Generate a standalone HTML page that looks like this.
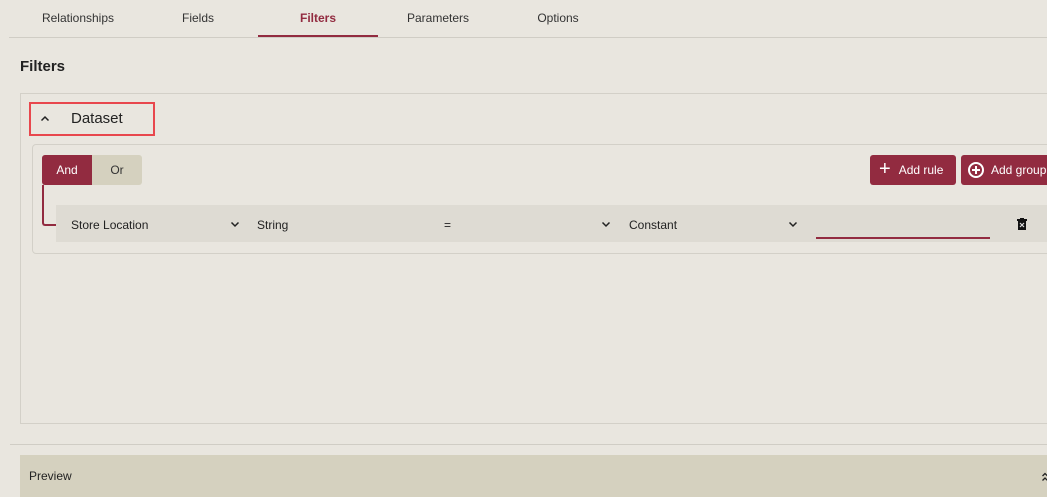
<!DOCTYPE html>
<html><head><style>
*{box-sizing:border-box;margin:0;padding:0}
body{width:1047px;height:497px;overflow:hidden;background:#e9e6df;font-family:"Segoe UI","Liberation Sans",sans-serif;color:#222;position:relative;font-size:12px}
.a{position:absolute}
.tab{position:absolute;top:11px;font-size:12px;color:#333;width:120px;text-align:center}
.btn{position:absolute;background:#922b40;color:#fff;border-radius:3px;font-size:12px;display:flex;align-items:center}
.t{position:absolute;top:218px}
</style></head><body>
<div class="tab" style="left:18px">Relationships</div>
<div class="tab" style="left:138px">Fields</div>
<div class="tab" style="left:258px;color:#922b40;font-weight:bold">Filters</div>
<div class="tab" style="left:378px">Parameters</div>
<div class="tab" style="left:498px">Options</div>
<div class="a" style="left:9px;top:37px;width:1038px;height:1px;background:#d0cdc5"></div>
<div class="a" style="left:258px;top:35px;width:120px;height:2px;background:#922b40"></div>
<div class="a" style="left:20px;top:58px;font-size:15px;font-weight:bold;color:#222">Filters</div>
<div class="a" style="left:20px;top:93px;width:1040px;height:331px;border:1px solid #d3d0c8"></div>
<div class="a" style="left:29px;top:102px;width:126px;height:34px;border:2px solid #e8474d"></div>
<svg class="a" style="left:40px;top:115px" width="10" height="7"><path d="M1.5 5.5L5 2l3.5 3.5" fill="none" stroke="#222" stroke-width="1.5"/></svg>
<div class="a" style="left:71px;top:110px;font-size:15px;color:#222">Dataset</div>
<div class="a" style="left:32px;top:144px;width:1030px;height:110px;border:1px solid #d3d0c8;border-radius:4px"></div>
<div class="a" style="left:42px;top:155px;width:100px;height:30px;background:#d5d1bf;border-radius:3px"></div>
<div class="btn" style="left:42px;top:155px;width:50px;height:30px;justify-content:center;border-radius:3px 0 0 3px">And</div>
<div class="a" style="left:92px;top:163px;width:50px;text-align:center;color:#333">Or</div>
<div class="a" style="left:42px;top:185px;width:14px;height:41px;border-left:2px solid #922b40;border-bottom:2px solid #922b40;border-bottom-left-radius:3px"></div>
<div class="btn" style="left:870px;top:155px;width:86px;height:30px;padding-left:9px"><span style="font-size:20px;margin-right:8px;line-height:1;margin-top:-2px">+</span>Add rule</div>
<div class="btn" style="left:961px;top:155px;width:100px;height:30px;padding-left:7px"><span style="display:inline-block;width:16px;height:16px;border:2px solid #fff;border-radius:50%;margin-right:7px;position:relative"><span style="position:absolute;left:5px;top:2px;width:2px;height:8px;background:#fff"></span><span style="position:absolute;left:2px;top:5px;width:8px;height:2px;background:#fff"></span></span>Add group</div>
<div class="a" style="left:56px;top:205px;width:991px;height:37px;background:#dedbd3"></div>
<div class="t" style="left:71px">Store Location</div>
<svg class="a" style="left:230px;top:221px" width="10" height="7"><path d="M1.5 1.5L5 5l3.5-3.5" fill="none" stroke="#222" stroke-width="1.5"/></svg>
<div class="t" style="left:257px">String</div>
<div class="t" style="left:444px">=</div>
<svg class="a" style="left:601px;top:221px" width="10" height="7"><path d="M1.5 1.5L5 5l3.5-3.5" fill="none" stroke="#222" stroke-width="1.5"/></svg>
<div class="t" style="left:629px">Constant</div>
<svg class="a" style="left:788px;top:221px" width="10" height="7"><path d="M1.5 1.5L5 5l3.5-3.5" fill="none" stroke="#222" stroke-width="1.5"/></svg>
<div class="a" style="left:816px;top:237px;width:174px;height:2px;background:#922b40"></div>
<svg class="a" style="left:1017px;top:218px" width="10" height="12" viewBox="0 0 10 12"><rect x="0" y="1" width="10" height="2" fill="#111"/><rect x="3" y="0" width="4" height="1" fill="#111"/><rect x="1" y="3" width="8" height="9" fill="#111"/><path d="M3 5l4 4M7 5l-4 4" stroke="#ddd" stroke-width="1.2"/></svg>
<div class="a" style="left:10px;top:444px;width:1037px;height:1px;background:#d0cdc5"></div>
<div class="a" style="left:20px;top:455px;width:1027px;height:42px;background:#d5d1bf"></div>
<div class="a" style="left:29px;top:469px;font-size:12px;color:#222">Preview</div>
<svg class="a" style="left:1042px;top:472px" width="5" height="10"><path d="M0.5 4L3 1.5 5.5 4M0.5 8.5L3 6 5.5 8.5" fill="none" stroke="#222" stroke-width="1.3"/></svg>
</body></html>
